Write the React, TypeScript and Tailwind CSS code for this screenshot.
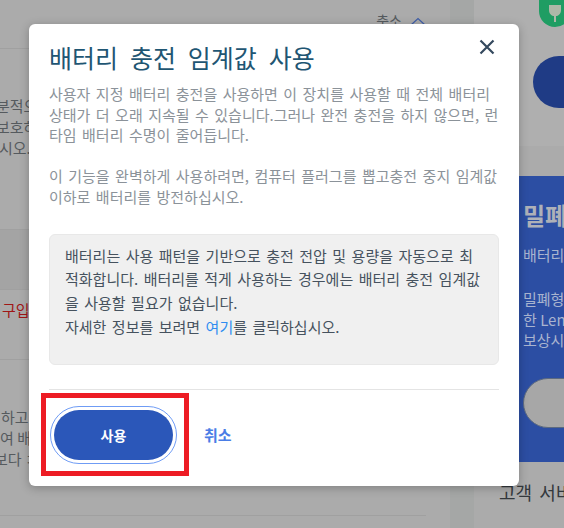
const font = { fontFamily: '"Noto Sans CJK KR", "Noto Sans", sans-serif' };

function LeftPanel() {
  return (
    <div className="w-[450px] h-[528px] bg-[#ababab] flex flex-col shrink-0 overflow-hidden text-[15px] text-[#555a5e]">
      <div className="h-[49px] border-b border-[#a0a0a0] flex justify-end gap-2 pr-[24px] pt-[7px]">
        <span className="text-[14px] leading-[26px]">축소</span>
        <svg className="mt-[10px]" width="16" height="10" viewBox="0 0 16 10" fill="none" stroke="#3f5ea8" strokeWidth="1.2"><path d="M1 8 L8 1.5 L15 8" /></svg>
      </div>
      <div className="h-[181px] border-b border-[#a0a0a0] pt-[46px] leading-[21px] whitespace-nowrap">
        <div className="-ml-[4px]">분적으</div>
        <div className="-ml-[4px]">보호하</div>
        <div className="-ml-[1px]">시오.</div>
      </div>
      <div className="h-[60px] bg-[#a4a4a4]" />
      <div className="h-[71px] border-y border-[#a0a0a0] pt-[7px] text-[#a01616] leading-[26px] -mt-px">
        <span className="pl-[2px]">구입</span>
      </div>
      <div className="h-[156px] border-b border-[#a0a0a0] mr-[24px] pt-[46px] leading-[21px] whitespace-nowrap">
        <div className="pl-[1px]">하고</div>
        <div>여 배</div>
        <div className="-ml-[6px]">보다 ㅈ</div>
      </div>
    </div>
  );
}

function RightPanel() {
  return (
    <div className="flex-1 flex h-[528px] bg-[#a5a7a6]">
      <div className="w-[24px] shrink-0" />
      <div className="flex-1 flex flex-col bg-[#ababab] overflow-hidden">
        <div className="h-[146px] bg-[#afafaf] pl-[65px] shrink-0 overflow-hidden">
          <div className="w-[32px] h-[27px] rounded-b-full bg-[#1f9d63] flex justify-center items-start">
            <svg width="16" height="22" viewBox="0 0 16 22" fill="#aeb8a8">
              <path d="M2 5 H14 V10 C14 14 11 16 9 16 V22 H7 V16 C5 16 2 14 2 10 Z" />
            </svg>
          </div>
          <div className="mt-[29px] -ml-[6px] w-[60px] h-[52px] rounded-l-full bg-[#1f3b85]" />
        </div>
        <div className="h-[30px] shrink-0" />
        <div className="h-[286px] bg-[#2c4ea3] shrink-0 pl-[49px] pt-[23px] whitespace-nowrap overflow-hidden text-[#a9b4cf]">
          <div className="text-[24px] font-bold leading-[32px] text-[#aeb1b8]">밀폐</div>
          <div className="text-[15px] leading-[20px] mt-[14px]">배터리</div>
          <div className="text-[15px] leading-[20.5px] mt-[24px]">밀폐형</div>
          <div className="text-[15px] leading-[20.5px]">한 Lenovo</div>
          <div className="text-[15px] leading-[20.5px]">보상시</div>
          <div className="w-[80px] h-[50px] rounded-[25px] bg-[#a7a7a7] border border-[#5c6a80] mt-[27px]" />
        </div>
        <div className="pl-[25px] pt-[17px] text-[18px] leading-[26px] text-[#33383c] whitespace-nowrap [word-spacing:3px]">고객 서비스</div>
      </div>
    </div>
  );
}

export default function App() {
  return (
    <div className="relative w-[564px] h-[528px] overflow-hidden flex bg-[#ababab]" style={font}>
      <LeftPanel />
      <RightPanel />

      <div className="absolute left-[29px] top-[24px] w-[490px] h-[462px] bg-white rounded-[6px] px-[20px] shadow-[0_2px_10px_rgba(0,0,0,0.25)] flex flex-col">
        <button className="absolute right-[22px] top-[13px] text-[#34495e]">
          <svg width="20" height="20" viewBox="0 0 20 20" fill="none" stroke="currentColor" strokeWidth="2.2"><path d="M3.5 3.5 L16.5 16.5 M16.5 3.5 L3.5 16.5" /></svg>
        </button>
        <h2 className="text-[25px] leading-[32px] mt-[17px] text-[#1f5673] [word-spacing:6.3px] whitespace-nowrap font-normal">배터리 충전 임계값 사용</h2>
        <div className="mt-[11px] text-[15px] leading-[20.6px] text-[#8b9299] whitespace-nowrap [word-spacing:2.1px]">
          <div>사용자 지정 배터리 충전을 사용하면 이 장치를 사용할 때 전체 배터리</div>
          <div>상태가 더 오래 지속될 수 있습니다.그러나 완전 충전을 하지 않으면, 런</div>
          <div>타임 배터리 수명이 줄어듭니다.</div>
          <div className="mt-[20.6px]">이 기능을 완벽하게 사용하려면, 컴퓨터 플러그를 뽑고충전 중지 임계값</div>
          <div>이하로 배터리를 방전하십시오.</div>
        </div>
        <div className="mt-[26px] h-[131px] rounded-[6px] bg-[#f0f0f0] border border-[#e8e8e8] pl-[15px] pt-[9px] text-[15px] leading-[23.5px] text-[#46525e] whitespace-nowrap [word-spacing:2.1px]">
          <div>배터리는 사용 패턴을 기반으로 충전 전압 및 용량을 자동으로 최</div>
          <div>적화합니다. 배터리를 적게 사용하는 경우에는 배터리 충전 임계값</div>
          <div>을 사용할 필요가 없습니다.</div>
          <div className="mt-[1px]">자세한 정보를 보려면 <span className="text-[#2f8cf0]">여기</span>를 클릭하십시오.</div>
        </div>
        <div className="mt-[24px] h-px bg-[#e4e4e4]" />
        <div className="relative flex items-center mt-[16px] gap-[27px]">
          <button className="w-[127px] h-[58px] ml-[1px] rounded-full border border-[#6f9cf5] p-[3px] bg-white">
            <span className="flex items-center justify-center w-full h-full rounded-full bg-[#2b57b9] text-white text-[14px] font-bold pt-[1px]">사용</span>
          </button>
          <a className="text-[15px] font-bold text-[#4a7de6] pt-[1px]">취소</a>
          <div className="absolute left-[-8px] top-[-13px] w-[148px] h-[83px] border-[5px] border-[#ed1c24]" />
        </div>
      </div>
    </div>
  );
}
